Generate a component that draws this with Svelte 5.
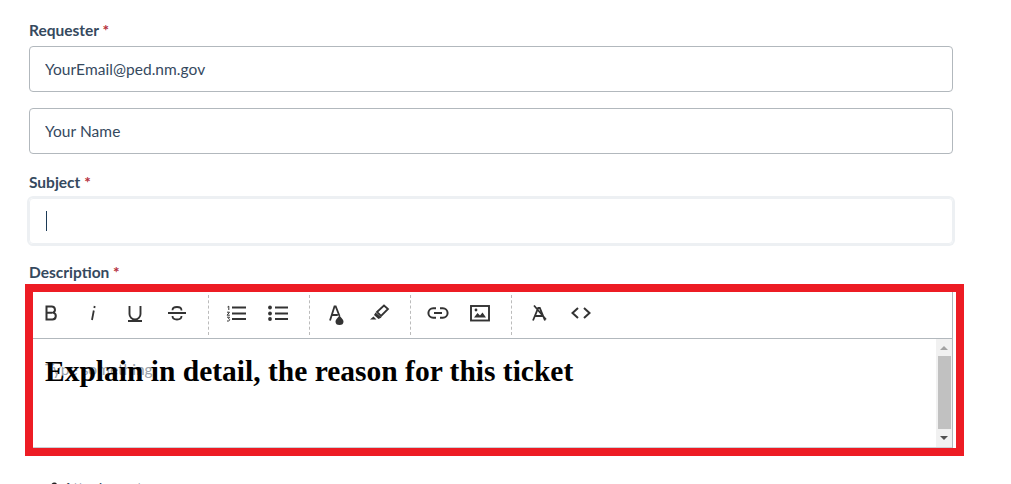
<script>
    let requester = $state('YourEmail@ped.nm.gov')
    let name = $state('Your Name')
</script>

<div class="page">
    <div class="field">
        <div class="label">Requester <span class="req">*</span></div>
        <input class="input" bind:value={requester} />
    </div>
    <div class="field second">
        <input class="input" bind:value={name} />
    </div>
    <div class="field subject">
        <div class="label">Subject <span class="req">*</span></div>
        <div class="input focused"><span class="caret"></span></div>
    </div>
    <div class="field description">
        <div class="label">Description <span class="req">*</span></div>
        <div class="annot">
            <div class="editor">
                <div class="toolbar">
                    <div class="group">
                        <button aria-label="Bold">
                            <svg viewBox="0 0 24 24"><path d="M7.500 5.500h5.200a3.200 3.200 0 0 1 1.400 6.100 3.500 3.500 0 0 1-1 6.900H7.500zM7.500 11.700h5.600" fill="none" stroke="#333" stroke-width="2"/></svg>
                        </button>
                        <button aria-label="Italic">
                            <svg viewBox="0 0 24 24"><path d="M12.800 9.500l-1.800 9.500M13.700 5l-.4 2" fill="none" stroke="#333" stroke-width="1.800"/></svg>
                        </button>
                        <button aria-label="Underline">
                            <svg viewBox="0 0 24 24"><path d="M6.500 5v8a5.500 5.500 0 0 0 11 0V5M5 20h14" fill="none" stroke="#333" stroke-width="1.900"/></svg>
                        </button>
                        <button aria-label="Strike">
                            <svg viewBox="0 0 24 24"><path d="M3 12h18M16.500 9.500c0-2.300-2-3.500-4.500-3.500S7.500 7.200 7.500 9.200M7.500 15c0 2.300 2 3.500 4.500 3.500s4.500-1.200 4.500-3.500" fill="none" stroke="#333" stroke-width="1.800"/></svg>
                        </button>
                    </div>
                    <div class="group">
                        <button aria-label="Ordered list">
                            <svg viewBox="0 0 24 24"><path d="M8 6.500h14M8 12.500h14M8 18h14" stroke="#333" stroke-width="2"/><path d="M3.500 6l1.300-.8V9M3 11.200h2.500l-2.400 3h2.800M3 16.200h2.500l-1 1.500c1.500 0 1.500 2.300-.1 2.300H3" fill="none" stroke="#333" stroke-width="1"/></svg>
                        </button>
                        <button aria-label="Bullet list">
                            <svg viewBox="0 0 24 24"><path d="M9 6.500h13M9 12.500h13M9 18h13" stroke="#333" stroke-width="2"/><circle cx="4" cy="6.500" r="1.900" fill="#333"/><circle cx="4" cy="12.500" r="1.900" fill="#333"/><circle cx="4" cy="18" r="1.900" fill="#333"/></svg>
                        </button>
                    </div>
                    <div class="group">
                        <button aria-label="Text color">
                            <svg viewBox="0 0 24 24"><path d="M5 19.500L9.500 5.500h1.200L14.500 15M6.800 14h6" fill="none" stroke="#333" stroke-width="1.800"/><path d="M14.500 14.500c2.400 2.800 4 4.500 4 6a4 3.500 0 0 1-8 0c0-1.500 1.600-3.200 4-6z" fill="#333"/></svg>
                        </button>
                        <button aria-label="Highlight">
                            <svg viewBox="0 0 24 24"><path d="M10 11l7-6.500 4 3.500-7 7z" fill="none" stroke="#333" stroke-width="1.800"/><path d="M8.500 11.500l6 5-3 1.500-4.500-4zM6.500 15.500l3 3H3z" fill="#333"/></svg>
                        </button>
                    </div>
                    <div class="group">
                        <button aria-label="Link">
                            <svg viewBox="0 0 24 24"><path d="M10 7.200H7.200a4.800 4.800 0 0 0 0 9.600H10M14 7.200h2.800a4.800 4.800 0 0 1 0 9.600H14M8 12h8" fill="none" stroke="#333" stroke-width="2"/></svg>
                        </button>
                        <button aria-label="Image">
                            <svg viewBox="0 0 24 24"><rect x="3" y="5" width="18" height="14.500" fill="none" stroke="#333" stroke-width="1.900"/><path d="M6 16.500l3.500-4.500 2.500 2.500 2.500-3 3.500 5z" fill="#333"/><circle cx="8" cy="9" r="1.400" fill="#333"/></svg>
                        </button>
                    </div>
                    <div class="group">
                        <button aria-label="Clear format">
                            <svg viewBox="0 0 24 24"><path d="M6 19.500L11.200 7h1.600L18 19.500M8 15h8M7 4.500l12 14" fill="none" stroke="#333" stroke-width="1.800"/></svg>
                        </button>
                        <button aria-label="Code">
                            <svg viewBox="0 0 24 24"><path d="M9 7l-5.500 5L9 17M15 7l5.500 5L15 17" fill="none" stroke="#333" stroke-width="2"/></svg>
                        </button>
                    </div>
                </div>
                <div class="body">
                    <div class="text">
                        <div class="placeholder">Type something</div>
                        <div class="note">Explain in detail, the reason for this ticket</div>
                    </div>
                    <div class="scrollbar">
                        <span class="arrow up"></span>
                        <span class="thumb"></span>
                        <span class="arrow down"></span>
                    </div>
                </div>
            </div>
        </div>
    </div>
    <div class="attach">
        <svg class="clip" viewBox="0 0 14 14"><path d="M2 14V5a2.500 2.500 0 0 1 5 0v9" fill="none" stroke="#222" stroke-width="1.600"/></svg>
        Attachments
    </div>
</div>

<style>
    :global(body) {
        margin: 0;
        background: #fff;
        overflow: hidden;
    }

    .page {
        height: 484px;
        padding: 21px 0 0 29px;
        box-sizing: border-box;
        overflow: hidden;
        font-family: Lato, sans-serif;
        color: #35495e;
    }

    .label {
        font-size: 15.500px;
        font-weight: 700;
        line-height: 18px;
        margin-bottom: 7px;
    }

    .req {
        color: #b5303c;
    }

    .input {
        display: block;
        box-sizing: border-box;
        width: 924px;
        height: 46px;
        padding: 0 15px;
        border: 1px solid #b2b8bd;
        border-radius: 4px;
        font: 15.500px Lato, sans-serif;
        letter-spacing: .05px;
        color: #35495e;
        outline: none;
    }

    .second {
        margin-top: 16px;
    }

    .subject {
        margin-top: 19px;
    }

    .focused {
        display: flex;
        align-items: center;
        border: 1px solid #edf0f3;
        box-shadow: 0 0 0 2px #edf0f3;
        padding: 0 16px;
    }

    .caret {
        width: 1px;
        height: 20px;
        background: #1c3a56;
    }

    .description {
        margin-top: 19px;
    }

    .annot {
        box-sizing: border-box;
        width: 939px;
        height: 172px;
        margin: -4px 0 0 -4px;
        border: 8px solid #ed1c24;
    }

    .editor {
        box-sizing: border-box;
        height: 156px;
        width: 920px;
        border-right: 1px solid #b2b8bd;
        display: flex;
        flex-direction: column;
    }

    .toolbar {
        display: flex;
        height: 46px;
        flex-shrink: 0;
        border-bottom: 1px solid #b2b8bd;
    }

    .group {
        display: flex;
        align-items: center;
        gap: 18px;
        padding: 0 19px 4px 15px;
        margin: 3px 0;
        border-right: 1px dashed #bbb;
    }

    .group:first-child {
        padding-left: 6px;
    }

    .group:last-child {
        border-right: 0;
    }

    button {
        width: 24px;
        height: 24px;
        padding: 0;
        border: 0;
        background: none;
    }

    button svg {
        display: block;
        width: 24px;
        height: 24px;
    }

    .body {
        display: flex;
        flex: 1;
        min-height: 0;
        border-bottom: 1px solid #c9d0d6;
    }

    .text {
        position: relative;
        flex: 1;
    }

    .placeholder {
        padding: 21px 0 0 12px;
        font-size: 15.500px;
        line-height: 18px;
        color: #9aa2aa;
    }

    .note {
        position: absolute;
        left: 12px;
        top: 16px;
        font: bold 29.500px "Liberation Serif", serif;
        color: #000;
        white-space: nowrap;
    }

    .scrollbar {
        width: 16px;
        background: #f1f1f1;
        display: flex;
        flex-direction: column;
        align-items: center;
    }

    .arrow {
        width: 0;
        height: 0;
        border-left: 4px solid transparent;
        border-right: 4px solid transparent;
    }

    .up {
        margin: 7px 0 6px;
        border-bottom: 4px solid #a3a3a3;
    }

    .down {
        margin: 7px 0;
        border-top: 4px solid #505050;
    }

    .thumb {
        flex: 1;
        width: 13px;
        background: #c1c1c1;
    }

    .attach {
        display: flex;
        align-items: flex-start;
        margin: 23px 0 0 21px;
        font-size: 15.500px;
        line-height: 18px;
    }

    .clip {
        width: 13px;
        height: 13px;
        margin-top: 2px;
    }
</style>
